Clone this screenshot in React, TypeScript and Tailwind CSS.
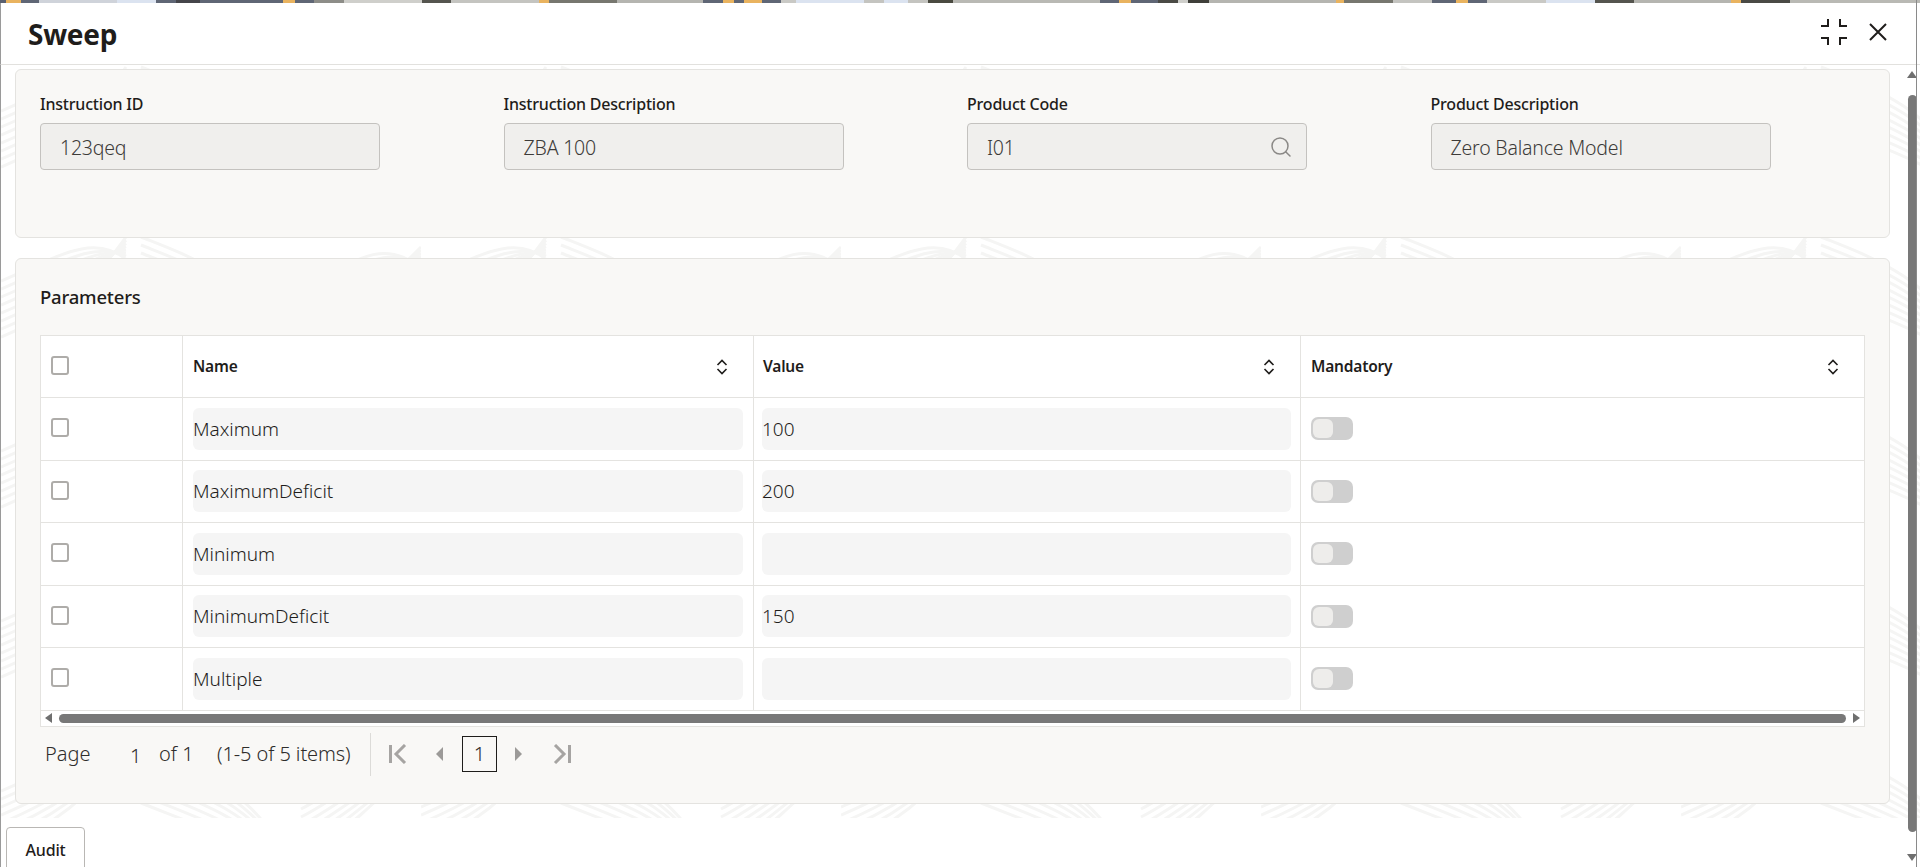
import { Search } from "lucide-react";

const font = { fontFamily: '"Noto Sans", sans-serif' };

const rows = [
    { name: "Maximum", value: "100" },
    { name: "MaximumDeficit", value: "200" },
    { name: "Minimum", value: "" },
    { name: "MinimumDeficit", value: "150" },
    { name: "Multiple", value: "" },
];

// scraps of the page that shows above the modal
const stripColors = [
    "bg-[#5a6070] w-[6px]", "bg-[#e9b35f] w-[16px]", "bg-[#5f6675] w-[18px]", "bg-[#cfd3da] w-[80px]", "bg-[#dbe3f0] w-[40px]",
    "bg-[#5f6675] w-[20px]", "bg-[#45454a] w-[25px]", "bg-[#5f6675] w-[85px]", "bg-[#e9b35f] w-[12px]", "bg-[#5f6675] w-[20px]",
    "bg-[#8d8d88] w-[30px]", "bg-[#cfcfcb] w-[80px]", "bg-[#55554f] w-[30px]", "bg-[#c4c4c0] w-[90px]", "bg-[#e9b35f] w-[10px]",
    "bg-[#77776f] w-[70px]", "bg-[#b5b5b0] w-[88px]", "bg-[#5f6675] w-[20px]", "bg-[#e9b35f] w-[12px]", "bg-[#5f6675] w-[10px]",
    "bg-[#e9b35f] w-[18px]", "bg-[#5f6675] w-[20px]", "bg-[#c9c9c5] w-[15px]", "bg-[#dbe3f0] w-[70px]", "bg-[#c4c4c0] w-[20px]",
    "bg-[#dbe3f0] w-[25px]", "bg-[#c4c4c0] w-[20px]", "bg-[#4a4a40] w-[26px]", "bg-[#b9b9b4] w-[150px]", "bg-[#5f6675] w-[20px]",
    "bg-[#e9b35f] w-[12px]", "bg-[#5f6675] w-[28px]", "bg-[#4a4a45] w-[20px]", "bg-[#cfcfcb] w-[10px]", "bg-[#3f3f3a] w-[22px]",
    "bg-[#b5b5b0] w-[130px]", "bg-[#e9b35f] w-[8px]", "bg-[#77776f] w-[50px]", "bg-[#c4c4c0] w-[40px]", "bg-[#5f6675] w-[25px]",
    "bg-[#e9b35f] w-[12px]", "bg-[#5f6675] w-[20px]", "bg-[#c9c9c5] w-[60px]", "bg-[#dbe3f0] w-[50px]", "bg-[#55554f] w-[40px]",
    "bg-[#b5b5b0] w-[100px]", "bg-[#e9b35f] w-[10px]", "bg-[#4a4a45] w-[50px]", "bg-[#b9b9b4] w-[133px]",
];

function Field({ label, value, search }: { label: string; value: string; search?: boolean }) {
    return (
        <div className="w-[340px] shrink-0">
            <div className="text-[16px] leading-[20px] font-medium text-[#1f1d1b] tracking-[-0.2px]">{label}</div>
            <div className="mt-[9px] h-[47px] bg-[#f0efed] border border-[#c4c2bf] rounded-[4px] pl-[19px] pr-[13px] flex items-center justify-between">
                <span className="text-[19.5px] pt-[2px] font-light text-[#3d3b39] tracking-[-0.2px]">{value}</span>
                {search && <Search size={24} strokeWidth={1.5} className="text-[#8a8886]" />}
            </div>
        </div>
    );
}

function SortIcon() {
    return (
        <svg width="12" height="16" viewBox="0 0 12 16" fill="none" stroke="#1f1d1b" strokeWidth="1.6">
            <path d="M1.5 6 L6 1.5 L10.5 6" />
            <path d="M1.5 10 L6 14.5 L10.5 10" />
        </svg>
    );
}

function Checkbox() {
    return <div className="w-[18px] h-[19px] bg-white border-2 border-[#aeaca9] rounded-[3px]" />;
}

function Toggle() {
    return (
        <div className="w-[42px] h-[23px] bg-[#cfcfcf] rounded-[7px] p-[2px]">
            <div className="w-[20px] h-[19px] bg-[#eeedeb] rounded-[6px]" />
        </div>
    );
}

function HeadCell({ label, width, className }: { label: string; width: string; className: string }) {
    return (
        <div className={`${width} border-r border-[#e4e3e0] last:border-r-0 flex items-center justify-between pr-[25px] ${className}`}>
            <span className="text-[15.5px] font-semibold text-[#1f1d1b] tracking-[-0.2px]">{label}</span>
            <SortIcon />
        </div>
    );
}

const offsets = Array.from({ length: 8 }, (_, i) => i * 8);

function Background() {
    return (
        <svg className="absolute inset-0 w-full h-full" xmlns="http://www.w3.org/2000/svg">
            <defs>
                <pattern id="swirl" width="420" height="170" patternUnits="userSpaceOnUse" patternTransform="translate(0 -18)">
                    <g fill="none" stroke="#f5f5f4" strokeWidth="3">
                        {offsets.map((o) => (
                            <g key={o}>
                                <path d={`M0 ${120 - o} C50 ${100 - o} 90 ${70 - o} 125 ${20 + o * 0.4}`} />
                                <path d={`M140 ${20 + o} C190 ${40 + o} 250 ${60 + o} 285 ${130 + o * 0.3}`} />
                                <path d={`M300 ${130 - o} C340 ${110 - o} 380 ${70 - o} 420 ${30 + o * 0.4}`} />
                            </g>
                        ))}
                    </g>
                </pattern>
            </defs>
            <rect width="100%" height="100%" fill="url(#swirl)" />
        </svg>
    );
}

function Pager() {
    return (
        <div className="flex items-center h-[43px] mt-[6px] text-[20px] text-[#2f2d2b] font-light">
            <span className="ml-[5px] w-[85px]">Page</span>
            <span className="w-[29px] pt-[4px]">1</span>
            <span className="w-[58px]">of 1</span>
            <span className="w-[153px] tracking-[-0.1px] whitespace-nowrap">(1-5 of 5 items)</span>
            <div className="w-px h-[43px] bg-[#dcdbd8]" />
            <svg className="ml-[17px]" width="20" height="20" viewBox="0 0 20 20" fill="#a6a4a2">
                <rect x="1" y="1" width="3" height="18" />
                <path d="M17 1 L8 10 L17 19" fill="none" stroke="#a6a4a2" strokeWidth="3" />
            </svg>
            <svg className="ml-[27px]" width="10" height="16" viewBox="0 0 10 16" fill="#9c9a98">
                <path d="M8 1 L1 8 L8 15 Z" />
            </svg>
            <div className="ml-[17px] w-[35px] h-[36px] border border-[#1f1d1b] flex items-center justify-center text-[#2f2d2b]">1</div>
            <svg className="ml-[16px]" width="10" height="16" viewBox="0 0 10 16" fill="#9c9a98">
                <path d="M2 1 L9 8 L2 15 Z" />
            </svg>
            <svg className="ml-[29px]" width="20" height="20" viewBox="0 0 20 20" fill="#a6a4a2">
                <rect x="16" y="1" width="3" height="18" />
                <path d="M3 1 L12 10 L3 19" fill="none" stroke="#a6a4a2" strokeWidth="3" />
            </svg>
        </div>
    );
}

export default function App() {
    return (
        <div className="relative h-[867px] w-full overflow-hidden bg-white flex flex-col" style={font}>
            {/* Page behind the modal */}
            <div className="flex h-[3px] shrink-0">
                {stripColors.map((c, i) => (
                    <div key={i} className={c} />
                ))}
            </div>

            {/* Header */}
            <div className="h-[62px] shrink-0 border-b border-[#e2e1de] pl-[27px] pr-[33px] flex items-center justify-between border-l border-l-[#9a9a9a]">
                <h1 className="text-[28px] font-bold text-[#1f1d1b] tracking-[-0.3px]">Sweep</h1>
                <div className="flex items-center gap-[22px] pb-[4px]">
                    <svg width="26" height="26" viewBox="0 0 26 26" fill="none" stroke="#1f1d1b" strokeWidth="2">
                        <path d="M7 0 V7 H0" />
                        <path d="M19 0 V7 H26" />
                        <path d="M7 26 V19 H0" />
                        <path d="M19 26 V19 H26" />
                    </svg>
                    <svg width="18" height="18" viewBox="0 0 18 18" fill="none" stroke="#1f1d1b" strokeWidth="2">
                        <path d="M1 1 L17 17 M17 1 L1 17" />
                    </svg>
                </div>
            </div>

            {/* Body */}
            <div className="relative flex-1 border-l border-l-[#9a9a9a]">
                <div className="absolute inset-x-0 top-0 h-[753px]">
                    <Background />
                </div>

                <div className="relative pl-[14px] pt-[4px] w-[1889px]">
                    {/* Instruction fields */}
                    <div className="h-[169px] bg-[#f9f8f6] border border-[#e4e3e0] rounded-[6px] pl-[24px] pt-[24px] flex gap-[123.5px]">
                        <Field label="Instruction ID" value="123qeq" />
                        <Field label="Instruction Description" value="ZBA 100" />
                        <Field label="Product Code" value="I01" search />
                        <Field label="Product Description" value="Zero Balance Model" />
                    </div>

                    {/* Parameters */}
                    <div className="mt-[20px] h-[546px] bg-[#f9f8f6] border border-[#e4e3e0] rounded-[6px] pl-[24px] pr-[24px] pt-[26px]">
                        <h2 className="text-[18.5px] leading-[24px] font-medium text-[#1f1d1b] tracking-[-0.2px]">Parameters</h2>

                        <div className="mt-[26px] bg-white border border-[#e4e3e0]">
                            <div className="flex h-[62px] border-b border-[#e4e3e0]">
                                <div className="w-[142px] border-r border-[#e4e3e0] pl-[10px] flex items-center pb-[3px]">
                                    <Checkbox />
                                </div>
                                <HeadCell label="Name" width="w-[571px]" className="pl-[10px]" />
                                <HeadCell label="Value" width="w-[547px]" className="pl-[9px]" />
                                <HeadCell label="Mandatory" width="flex-1" className="pl-[10px]" />
                            </div>

                            {rows.map((row) => (
                                <div key={row.name} className="flex h-[62.5px] border-b border-[#e4e3e0]">
                                    <div className="w-[142px] border-r border-[#e4e3e0] pl-[10px] flex items-center pb-[2px]">
                                        <Checkbox />
                                    </div>
                                    <div className="w-[571px] border-r border-[#e4e3e0] px-[10px] flex items-center">
                                        <div className="w-full h-[42px] bg-[#f5f5f5] rounded-[6px] flex items-center text-[19px] text-[#1f1d1b] font-light">
                                            {row.name}
                                        </div>
                                    </div>
                                    <div className="w-[547px] border-r border-[#e4e3e0] pl-[8px] pr-[9px] flex items-center">
                                        <div className="w-full h-[42px] bg-[#f5f5f5] rounded-[6px] flex items-center text-[19px] text-[#1f1d1b] font-light">
                                            {row.value}
                                        </div>
                                    </div>
                                    <div className="flex-1 pl-[10px] flex items-center">
                                        <Toggle />
                                    </div>
                                </div>
                            ))}

                            {/* Horizontal scrollbar */}
                            <div className="h-[15px] flex items-center pl-[3px] pr-[3px] gap-[6px]">
                                <svg width="9" height="10" viewBox="0 0 9 10" fill="#6f6f6f">
                                    <path d="M8 0 L1 5 L8 10 Z" />
                                </svg>
                                <div className="flex-1 h-[9px] bg-[#787878] rounded-full" />
                                <svg width="9" height="10" viewBox="0 0 9 10" fill="#6f6f6f">
                                    <path d="M1 0 L8 5 L1 10 Z" />
                                </svg>
                            </div>
                        </div>

                        <Pager />
                    </div>

                    {/* Audit tab */}
                    <div className="-ml-[9px] mt-[23px] w-[79px] h-[60px] bg-white border border-[#b9b7b4] rounded-t-[4px] pt-[10px] text-center text-[16px] font-medium text-[#1f1d1b] tracking-[-0.2px]">
                        Audit
                    </div>
                </div>
            </div>

            {/* Vertical scrollbar of the modal */}
            <div className="absolute right-[2px] top-[65px] bottom-0 w-[12px] flex flex-col items-center">
                <svg className="mt-[5px]" width="10" height="9" viewBox="0 0 10 9" fill="#6f6f6f">
                    <path d="M0 8 L5 1 L10 8 Z" />
                </svg>
                <div className="mt-[16px] w-[9px] h-[737px] bg-[#787878] rounded-full" />
                <svg className="mt-[21px]" width="10" height="9" viewBox="0 0 10 9" fill="#6f6f6f">
                    <path d="M0 1 L5 8 L10 1 Z" />
                </svg>
            </div>
            <div className="absolute right-[3px] top-0 bottom-0 w-px bg-[#8a8a8a]" />
        </div>
    );
}
